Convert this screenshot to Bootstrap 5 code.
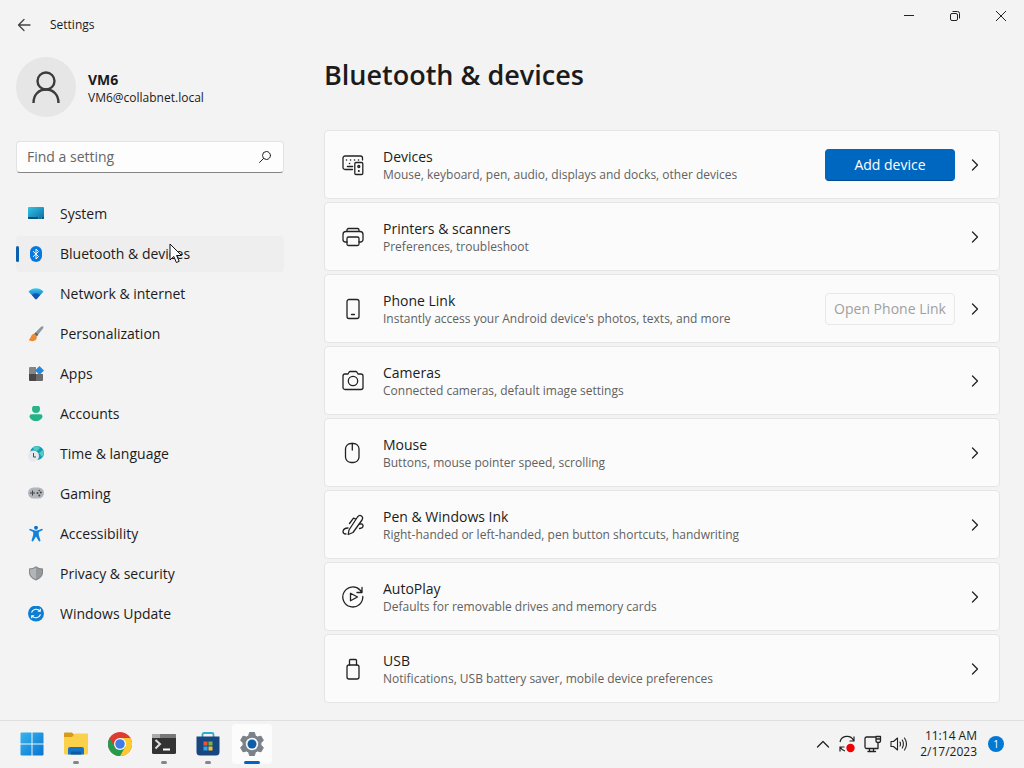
<!DOCTYPE html>
<html lang="en">
<head>
<meta charset="utf-8">
<meta name="viewport" content="width=device-width, initial-scale=1">
<title>Settings</title>
<link href="https://cdn.jsdelivr.net/npm/bootstrap@5.3.0/dist/css/bootstrap.min.css" rel="stylesheet">
<style>
  body { font-family: "Open Sans", "Noto Sans", sans-serif; font-size: 14px; line-height: 20px; color: #1b1b1b; background: #f3f3f3; }
  svg { display: block; flex: none; }
  .line-icon { fill: none; stroke: #222; stroke-width: 1.3; stroke-linecap: round; stroke-linejoin: round; }
  .plain-btn { border: 0; background: none; padding: 0; color: inherit; display: flex; align-items: center; justify-content: center; }
  .fine { font-size: 12px; line-height: 16px; }
  .title-bar { height: 49px; padding-left: 16px; }
  .title-bar .app-name { margin-left: 18px; }
  .title-bar .caption-btn { width: 46px; height: 32px; }
  .side-pane { width: 300px; padding: 8px 16px 16px; }
  .avatar { width: 60px; height: 60px; background: #e6e6e6; }
  .account-text { padding-top: 2px; }
  .search-box { height: 32px; margin: 24px 0 23px; background: #fdfdfd; border: 1px solid #e2e2e2; border-bottom-color: #868686; border-radius: 4px; padding: 0 10px; }
  .search-box input { border: 0; background: none; outline: 0; padding: 0; min-width: 0; color: #1b1b1b; }
  .search-box input::placeholder { color: #666; opacity: 1; }
  .side-nav { gap: 4px; }
  .side-nav a { height: 36px; padding: 0 12px; gap: 16px; color: #1b1b1b; text-decoration: none; border-radius: 4px; position: relative; }
  .side-nav a.active { background: #eeeeee; }
  .side-nav a.active::before { content: ""; position: absolute; left: 0; top: 10px; width: 3px; height: 16px; border-radius: 2px; background: #0a5fae; }
  .pointer { position: absolute; left: 153px; top: 7px; }
  .main-pane { padding: 7px 24px 17px 24px; }
  .main-pane h1 { font-size: 27px; line-height: 38px; font-weight: 600; margin-bottom: 36px; }
  .setting-list { gap: 3px; }
  .setting-row { height: 69px; padding: 0 17px; background: #fbfbfb; border: 1px solid #e5e5e5; border-radius: 4px; }
  .setting-row .copy { margin-left: 19px; }
  .setting-row .fine { color: #616161; }
  .setting-row .go { width: 14px; height: 32px; margin-left: 13px; }
  .row-btn { width: 130px; height: 32px; padding: 0; font-size: 14px; line-height: 20px; border-radius: 4px; }
  .row-btn.btn-primary { --bs-btn-bg: #0067c0; --bs-btn-border-color: #0067c0; border-bottom-color: #004c8f; }
  .row-btn.btn-light:disabled { background: #fbfbfb; border-color: #e8e8e8; color: #a0a0a0; opacity: 1; }
  .task-bar { height: 48px; background: #f3f3f3; border-top: 1px solid #e0e0e0; padding: 0 20px 1px 12px; }
  .task-apps { gap: 4px; }
  .task-apps button { width: 40px; height: 40px; position: relative; border-radius: 4px; }
  .task-apps .running::after { content: ""; position: absolute; bottom: 0; left: 17px; width: 6px; height: 3px; border-radius: 2px; background: #868686; }
  .task-apps .current { background: #fcfcfc; }
  .task-apps .running.current::after { left: 12px; width: 16px; background: #0067c0; }
  .tray { gap: 8px; }
  .clock { margin: 0 3px 0 4px; }
  .note-count { width: 16px; height: 16px; border-radius: 50%; background: #0078d4; color: #fff; font-size: 10px; line-height: 16px; }
</style>
</head>
<body>
<div class="d-flex flex-column min-vh-100">
  <header class="title-bar d-flex">
    <div class="d-flex align-items-center flex-grow-1">
      <button class="plain-btn" aria-label="Back"><svg class="line-icon" style="stroke:#444" width="16" height="16" viewBox="0 0 16 16"><path d="M14 8H2.500M8 2.500 2.500 8 8 13.500"/></svg></button>
      <span class="fine app-name">Settings</span>
    </div>
    <button class="plain-btn caption-btn" aria-label="Minimize"><svg width="12" height="12" viewBox="0 0 12 12" stroke="#222"><path d="M1 5.500H11"/></svg></button>
    <button class="plain-btn caption-btn" aria-label="Restore"><svg width="12" height="12" viewBox="0 0 12 12" fill="none" stroke="#222"><rect x="1.500" y="3.500" width="7" height="7" rx="1.500"/><path d="M3.500 1.500H8.500a2 2 0 0 1 2 2V8.500"/></svg></button>
    <button class="plain-btn caption-btn" aria-label="Close"><svg width="12" height="12" viewBox="0 0 12 12" stroke="#222"><path d="M1 1 11 11M11 1 1 11"/></svg></button>
  </header>

  <div class="d-flex flex-grow-1">
    <aside class="side-pane flex-shrink-0">
      <div class="d-flex align-items-center">
        <div class="avatar rounded-circle d-flex align-items-center justify-content-center"><svg width="30" height="34" viewBox="0 0 30 34" fill="none" stroke="#3c3c3c" stroke-width="2.400"><circle cx="15" cy="11" r="8.500"/><path d="M2.500 33c0-8 5-13.500 12.500-13.500s12.500 5.500 12.500 13.500"/></svg></div>
        <div class="account-text ms-2 ps-1">
          <div class="fw-bold">VM6</div>
          <div class="fine">VM6@collabnet.local</div>
        </div>
      </div>
      <form class="search-box d-flex align-items-center" role="search">
        <input class="flex-grow-1" type="text" placeholder="Find a setting" aria-label="Find a setting">
        <button type="button" class="plain-btn" aria-label="Search"><svg class="line-icon" width="16" height="16" viewBox="0 0 16 16" style="stroke-width:1"><circle cx="9.500" cy="6.500" r="4"/><path d="M6.500 9.500 2.500 13.500"/></svg></button>
      </form>
      <nav class="side-nav d-flex flex-column" aria-label="Settings">
        <a href="#" class="d-flex align-items-center"><svg width="16" height="16" viewBox="0 0 16 16"><defs><linearGradient id="sys" x1="0" y1="0" x2="1" y2="1"><stop stop-color="#35c4e2"/><stop offset="1" stop-color="#0c6ca7"/></linearGradient></defs><rect y="1" width="16" height="12" rx="1" fill="url(#sys)"/><path d="M0 11h16v1a1 1 0 0 1-1 1H1a1 1 0 0 1-1-1z" fill="#075078"/><path d="M10 12h4" stroke="#65bad8" stroke-dasharray="1 .5"/></svg>System</a>
        <a href="#" class="d-flex align-items-center active" aria-current="page"><svg width="16" height="16" viewBox="0 0 16 16"><rect x="2" width="12" height="16" rx="6" fill="#0878dc"/><path d="M5 5.200 10.500 10.500 8 13V3l2.500 2.500L5 10.800" fill="none" stroke="#fff"/></svg>Bluetooth &amp; devices
          <svg class="pointer" width="14" height="21" viewBox="0 0 14 21"><path d="M1 1V17L4.800 13.500 7.400 19.500 10.200 18.300 7.600 12.500H12.600Z" fill="#fff" stroke="#111"/></svg></a>
        <a href="#" class="d-flex align-items-center"><svg width="16" height="16" viewBox="0 0 16 16"><defs><linearGradient id="net" x1="0" y1="0" x2="0" y2="1"><stop stop-color="#3fd0f0"/><stop offset=".45" stop-color="#1d93dc"/><stop offset="1" stop-color="#1450aa"/></linearGradient></defs><path d="M.5 5.500C4.500 1 11.500 1 15.500 5.500L8.700 13Q8 13.500 7.300 13Z" fill="url(#net)"/><path d="M4 9Q8 5.500 12 9L8.700 13Q8 13.500 7.300 13Z" fill="#1553ae"/></svg>Network &amp; internet</a>
        <a href="#" class="d-flex align-items-center"><svg width="16" height="16" viewBox="0 0 16 16"><path d="M14.800.3Q16 1 15 2.500L8.800 10.300 6 8 12.800 1Q14-.2 14.800.3z" fill="#8998a2"/><path d="m7.500 6.500 2.800 2L9 10.300 6.200 8z" fill="#59656d"/><path d="M6 8C3 7.800 3.500 11.500.8 14c2 2 7 1.500 8-2 .2-2-.8-3.500-2.800-4z" fill="#eb8b34"/></svg>Personalization</a>
        <a href="#" class="d-flex align-items-center"><svg width="16" height="16" viewBox="0 0 16 16"><path d="M1 2a1 1 0 0 1 1-1h6v7H1z" fill="#858585"/><path d="M1 8h7v7H2a1 1 0 0 1-1-1z" fill="#484848"/><path d="M8 8h7v6a1 1 0 0 1-1 1H8z" fill="#6b6b6b"/><path d="M11.500 0 16 4.500 11.500 9 7 4.500z" fill="#2489df"/></svg>Apps</a>
        <a href="#" class="d-flex align-items-center"><svg width="16" height="16" viewBox="0 0 16 16"><circle cx="8" cy="3" r="4" fill="#2ab487"/><path d="M3.500 8.200h9a2 2 0 0 1 2 2c0 2.500-3 4.800-6.500 4.800s-6.500-2.300-6.500-4.800a2 2 0 0 1 2-2z" fill="#22b486"/></svg>Accounts</a>
        <a href="#" class="d-flex align-items-center"><svg width="16" height="16" viewBox="0 0 16 16"><circle cx="9" cy="7" r="7" fill="#199ab5"/><path d="M5 1.500Q9-1 12 2L9 5 6 4zM11 7l4-3q2 4-1 7z" fill="#52ccc5"/><circle cx="5.500" cy="10" r="5.500" fill="#e7e7ec"/><path d="M5.500 7v4H8" fill="none" stroke="#424955"/></svg>Time &amp; language</a>
        <a href="#" class="d-flex align-items-center"><svg width="16" height="16" viewBox="0 0 16 16"><rect y="1.500" width="16" height="11" rx="5.500" fill="#b0b6bb"/><path d="M2 7h5M4.500 4.500v5" stroke="#444"/><g fill="#444"><circle cx="9.500" cy="7" r="1"/><circle cx="12.800" cy="6.500" r="1"/><circle cx="11.300" cy="4.500" r=".8"/><circle cx="11.300" cy="9.500" r="1"/></g></svg>Gaming</a>
        <a href="#" class="d-flex align-items-center"><svg width="16" height="16" viewBox="0 0 16 16"><circle cx="8" cy="1.800" r="1.900" fill="#0b70c8"/><path d="M2 2.700 6 4.300Q8 5 10 4.300L14 2.700Q15.300 3 14.500 4.200L10.800 6V9L12.500 14.500Q11.800 16 10.700 15L8 10.500 5.300 15Q4.200 16 3.500 14.500L5.200 9V6L1.500 4.200Q.8 3 2 2.700z" fill="#1382d8"/></svg>Accessibility</a>
        <a href="#" class="d-flex align-items-center"><svg width="16" height="16" viewBox="0 0 16 16"><path d="M8 .3Q11 2.500 15 2.500v4c0 3.500-2.500 6-7 8-4.500-2-7-4.500-7-8v-4Q5 2.500 8 .3z" fill="#82868a"/><path d="M8 1.500Q11 3.500 14 3.500v3c0 3-2 5-6 6.800z" fill="#96999c"/><path d="M8 1.500Q5 3.500 2 3.500v3c0 3 2 5 6 6.800z" fill="#b2b5b7"/></svg>Privacy &amp; security</a>
        <a href="#" class="d-flex align-items-center"><svg width="16" height="16" viewBox="0 0 16 16"><circle cx="8" cy="7.500" r="8" fill="#0f7ed2"/><path d="M3.500 6.500A5 5 0 0 1 12 5M12.300 2.800V5.300H9.800M12.500 8.500A5 5 0 0 1 4 10M3.700 12.200V9.700H6.200" fill="none" stroke="#fff" stroke-width="1.100"/></svg>Windows Update</a>
      </nav>
    </aside>

    <main class="main-pane flex-grow-1">
      <h1>Bluetooth &amp; devices</h1>
      <div class="setting-list d-flex flex-column">
        <section class="setting-row d-flex align-items-center">
          <svg class="line-icon" width="22" height="22" viewBox="0 0 22 22"><path d="M10.500 15.500H3a2 2 0 0 1-2-2V4a2 2 0 0 1 2-2H18.500a2 2 0 0 1 2 2V6"/><rect x="12.800" y="8.500" width="8" height="12" rx="1.200"/><path d="M4.500 6h.1M8.500 6h.1M12.500 6h.1M16.500 6h.1M7.500 9.500h.1M5.500 12.500h5" stroke-width="1.500"/><circle cx="16.800" cy="12.500" r="1"/><path d="M16.800 17h.1" stroke-width="2"/></svg>
          <div class="copy flex-grow-1"><div>Devices</div><div class="fine">Mouse, keyboard, pen, audio, displays and docks, other devices</div></div>
          <button class="btn btn-primary row-btn">Add device</button>
          <button class="plain-btn go" aria-label="Devices"><svg class="line-icon" width="8" height="12" viewBox="0 0 8 12"><path d="M1.500 1 6.500 6 1.500 11"/></svg></button>
        </section>
        <section class="setting-row d-flex align-items-center">
          <svg class="line-icon" width="22" height="22" viewBox="0 0 22 22"><path d="M5 16H3.500A2.500 2.500 0 0 1 1 13.500V8.500a3 3 0 0 1 3-3H18a3 3 0 0 1 3 3v5A2.500 2.500 0 0 1 18.500 16H17M5 5.500V4a1.500 1.500 0 0 1 1.500-1.500h9A1.500 1.500 0 0 1 17 4V5.500"/><rect x="5" y="11" width="12" height="8.500" rx="1.500"/></svg>
          <div class="copy flex-grow-1"><div>Printers &amp; scanners</div><div class="fine">Preferences, troubleshoot</div></div>
          <button class="plain-btn go" aria-label="Printers and scanners"><svg class="line-icon" width="8" height="12" viewBox="0 0 8 12"><path d="M1.500 1 6.500 6 1.500 11"/></svg></button>
        </section>
        <section class="setting-row d-flex align-items-center">
          <svg class="line-icon" width="22" height="22" viewBox="0 0 22 22"><rect x="5" y="1.500" width="12" height="19" rx="2"/><path d="M9.500 16.500h3"/></svg>
          <div class="copy flex-grow-1"><div>Phone Link</div><div class="fine">Instantly access your Android device's photos, texts, and more</div></div>
          <button class="btn btn-light row-btn" disabled>Open Phone Link</button>
          <button class="plain-btn go" aria-label="Phone Link"><svg class="line-icon" width="8" height="12" viewBox="0 0 8 12"><path d="M1.500 1 6.500 6 1.500 11"/></svg></button>
        </section>
        <section class="setting-row d-flex align-items-center">
          <svg class="line-icon" width="22" height="22" viewBox="0 0 22 22"><path d="M3 4H6L7.200 2Q7.600 1.500 8.200 1.500H13.800Q14.400 1.500 14.800 2L16 4H19a2 2 0 0 1 2 2V17.500a2 2 0 0 1-2 2H3a2 2 0 0 1-2-2V6a2 2 0 0 1 2-2z"/><circle cx="11" cy="11" r="4.700"/></svg>
          <div class="copy flex-grow-1"><div>Cameras</div><div class="fine">Connected cameras, default image settings</div></div>
          <button class="plain-btn go" aria-label="Cameras"><svg class="line-icon" width="8" height="12" viewBox="0 0 8 12"><path d="M1.500 1 6.500 6 1.500 11"/></svg></button>
        </section>
        <section class="setting-row d-flex align-items-center">
          <svg class="line-icon" width="22" height="22" viewBox="0 0 22 22"><rect x="3.500" y="1.500" width="13.500" height="19" rx="5.500"/><path d="M10.300 1.500V8"/></svg>
          <div class="copy flex-grow-1"><div>Mouse</div><div class="fine">Buttons, mouse pointer speed, scrolling</div></div>
          <button class="plain-btn go" aria-label="Mouse"><svg class="line-icon" width="8" height="12" viewBox="0 0 8 12"><path d="M1.500 1 6.500 6 1.500 11"/></svg></button>
        </section>
        <section class="setting-row d-flex align-items-center">
          <svg class="line-icon" width="22" height="22" viewBox="0 0 22 22"><path d="M6.200 20.500 7 16 15.500 3Q17.500 .5 19.500 2T20 6L11 18.500 6.200 20.500zM14 5.200 11.500 4.200 7.500 9.500M17 10.500Q20.500 9 21 11.500T17.500 14.500M6 14Q1.500 14 1 17.500 1 20 4 20"/></svg>
          <div class="copy flex-grow-1"><div>Pen &amp; Windows Ink</div><div class="fine">Right-handed or left-handed, pen button shortcuts, handwriting</div></div>
          <button class="plain-btn go" aria-label="Pen and Windows Ink"><svg class="line-icon" width="8" height="12" viewBox="0 0 8 12"><path d="M1.500 1 6.500 6 1.500 11"/></svg></button>
        </section>
        <section class="setting-row d-flex align-items-center">
          <svg class="line-icon" width="22" height="22" viewBox="0 0 22 22"><path d="M20.800 10.500A10 10 0 1 1 18 4L20 6.500M20 1.500V6.500H15M8.500 7.200V14.800L15.500 11z"/></svg>
          <div class="copy flex-grow-1"><div>AutoPlay</div><div class="fine">Defaults for removable drives and memory cards</div></div>
          <button class="plain-btn go" aria-label="AutoPlay"><svg class="line-icon" width="8" height="12" viewBox="0 0 8 12"><path d="M1.500 1 6.500 6 1.500 11"/></svg></button>
        </section>
        <section class="setting-row d-flex align-items-center">
          <svg class="line-icon" width="22" height="22" viewBox="0 0 22 22"><rect x="5" y="7" width="12" height="14" rx="2"/><path d="M7.500 7V2.500a1 1 0 0 1 1-1h5a1 1 0 0 1 1 1V7"/></svg>
          <div class="copy flex-grow-1"><div>USB</div><div class="fine">Notifications, USB battery saver, mobile device preferences</div></div>
          <button class="plain-btn go" aria-label="USB"><svg class="line-icon" width="8" height="12" viewBox="0 0 8 12"><path d="M1.500 1 6.500 6 1.500 11"/></svg></button>
        </section>
      </div>
    </main>
  </div>

  <footer class="task-bar d-flex align-items-center justify-content-between">
    <div class="task-apps d-flex">
      <button class="plain-btn" aria-label="Start"><svg width="24" height="24" viewBox="0 0 24 24"><defs><linearGradient id="win" x1="0" y1="0" x2="1" y2="1" ><stop stop-color="#38b6ef"/><stop offset="1" stop-color="#0774d0"/></linearGradient></defs><path d="M1.500.5h10v11H.5v-10a1 1 0 0 1 1-1zM12.500.5h10a1 1 0 0 1 1 1v10h-11zM.5 12.500h11v11h-10a1 1 0 0 1-1-1zM12.500 12.500h11v10a1 1 0 0 1-1 1h-10z" fill="url(#win)"/></svg></button>
      <button class="plain-btn running" aria-label="File Explorer"><svg width="24" height="24" viewBox="0 0 24 24"><path d="M1 .5h7l3 3-3 4H0v-6a1 1 0 0 1 1-1z" fill="#d79b18"/><path d="M0 5h8l3-3.500h12a1 1 0 0 1 1 1V21a1.500 1.500 0 0 1-1.500 1.500h-21A1.500 1.500 0 0 1 0 21z" fill="#fbd04b"/><path d="M4 22.500V17a2 2 0 0 1 2-2h12a2 2 0 0 1 2 2v5.500z" fill="#1673c6"/><path d="M7 22.500V20.500a1 1 0 0 1 1-1h8a1 1 0 0 1 1 1v2z" fill="#0c5aa5"/></svg></button>
      <button class="plain-btn" aria-label="Chrome"><svg width="24" height="24" viewBox="0 0 24 24"><circle cx="12" cy="12" r="12" fill="#de3b31"/><path d="M1.600 6A12 12 0 0 0 12 24L17.200 15H6.800z" fill="#259b4b"/><path d="M22.400 6H12L17.200 15 12 24A12 12 0 0 0 22.400 6z" fill="#fbcb2f"/><circle cx="12" cy="12" r="6" fill="#fff"/><circle cx="12" cy="12" r="4.800" fill="#3d7de5"/></svg></button>
      <button class="plain-btn running" aria-label="Terminal"><svg width="24" height="20" viewBox="0 0 24 20"><rect width="24" height="20" rx="1.500" fill="#333"/><path d="M1.500 0h21A1.500 1.500 0 0 1 24 1.500V4H0V1.500A1.500 1.500 0 0 1 1.500 0z" fill="#777"/><path d="M0 0h8v4H0z" fill="#aaa"/><path d="M3.500 6 8 10 3.500 14.500" fill="none" stroke="#ddd" stroke-width="2"/><path d="M11 15.500h7" stroke="#fff" stroke-width="2"/></svg></button>
      <button class="plain-btn running" aria-label="Microsoft Store"><svg width="24" height="24" viewBox="0 0 24 24"><path d="M6.500 5V2.500A1.500 1.500 0 0 1 8 1h8a1.500 1.500 0 0 1 1.500 1.500V5" fill="none" stroke="#31a9d6" stroke-width="1.800"/><path d="M.5 4.500h23V20a3.500 3.500 0 0 1-3.500 3.500H4A3.500 3.500 0 0 1 .5 20z" fill="#17477e"/><path d="M7.500 9.500h4v4h-4z" fill="#eb5435"/><path d="M12.500 9.500h4v4h-4z" fill="#7cb342"/><path d="M7.500 14.500h4v4h-4z" fill="#30a5e6"/><path d="M12.500 14.500h4v4h-4z" fill="#f6c22c"/></svg></button>
      <button class="plain-btn running current" aria-label="Settings"><svg width="26" height="26" viewBox="0 0 26 26"><path d="M10.500 1.500h5l.8 3.300 2.300 1.300 3.300-1 2.500 4.300-2.500 2.300v2.600l2.500 2.300-2.500 4.300-3.300-1-2.300 1.300-.8 3.300h-5l-.8-3.300-2.300-1.300-3.300 1-2.500-4.300 2.500-2.300v-2.600L1.600 9.400l2.500-4.300 3.300 1 2.300-1.300z" fill="#7b8188" stroke="#7b8188" stroke-linejoin="round"/><circle cx="13" cy="13" r="6.200" fill="#f4f6f8"/><circle cx="13" cy="13" r="4.500" fill="#0d5da8"/></svg></button>
    </div>
    <div class="tray d-flex align-items-center">
      <button class="plain-btn" aria-label="Show hidden icons"><svg class="line-icon" width="14" height="10" viewBox="0 0 14 10"><path d="M1.500 8 7 2.500 12.500 8"/></svg></button>
      <button class="plain-btn" aria-label="Windows Update status"><svg width="18" height="18" viewBox="0 0 18 18"><path d="M2 7A7.200 7.200 0 0 1 15.500 5.500M16 1.500V6H11.500M2 16.500V12H6.500M2.500 12.500Q4 15.500 7 16" fill="none" stroke="#222" stroke-width="1.200"/><circle cx="12.500" cy="13" r="4.200" fill="#f00000"/></svg></button>
      <button class="plain-btn" aria-label="Network"><svg class="line-icon" width="18" height="18" viewBox="0 0 18 18"><path d="M11 2H2.500A1.500 1.500 0 0 0 1 3.500V12a1.500 1.500 0 0 0 1.500 1.500H14V8M5.500 13.500V16.500M9.500 13.500V16.500M4 16.500H11.500M12 1.500H16.500V5.500a2 2 0 0 1-2 2h-.5a2 2 0 0 1-2-2zM12.500 4H16"/></svg></button>
      <button class="plain-btn" aria-label="Volume"><svg class="line-icon" style="stroke-width:1.100" width="18" height="16" viewBox="0 0 18 16"><path d="M1 5.500V10.500H3.500L7.500 14V2L3.500 5.500zM10 6Q11 8 10 10M12.300 4Q14.500 8 12.300 12M14.500 2Q18.500 8 14.500 14"/></svg></button>
      <time class="fine text-end clock" datetime="2023-02-17T11:14">11:14 AM<br>2/17/2023</time>
      <button class="plain-btn note-count" aria-label="1 notification">1</button>
    </div>
  </footer>
</div>
<script src="https://cdn.jsdelivr.net/npm/bootstrap@5.3.0/dist/js/bootstrap.bundle.min.js"></script>
</body>
</html>
